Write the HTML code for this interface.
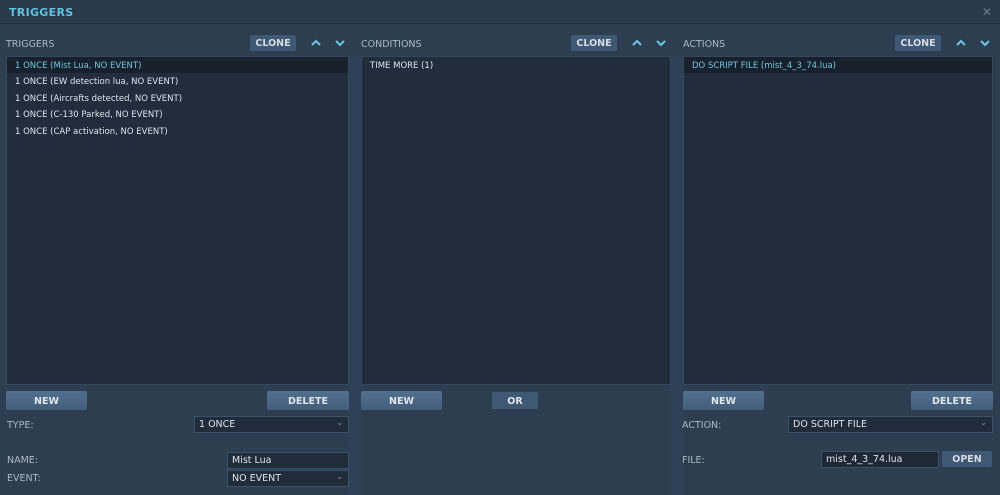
<!DOCTYPE html>
<html><head><style>
*{box-sizing:border-box;margin:0;padding:0}
body{width:1000px;height:495px;background:#2d3e51;font-family:"DejaVu Sans","Liberation Sans",sans-serif;position:relative;overflow:hidden;color:#c9d1da}
.a{position:absolute}
.hdr{left:0;top:0;width:1000px;height:24px;background:#2a394b;border-bottom:1px solid #25323f}
.title{left:9px;top:6px;font-size:11px;font-weight:bold;color:#5fc3e0;letter-spacing:.3px}
.x{left:982px;top:5px;color:#6d7c8c;font-size:12px}
.lbl{font-size:9.5px;color:#aeb7c1}
.list{background:#212d3c;border:1px solid #34475c}
.row{position:absolute;left:0;right:0;height:16px;font-size:8.5px;padding:4px 0 0 8px;color:#dde3e9}
.sel{background:#18212b;color:#6cc6e2}
.clone{height:16px;width:46px;background:#3f5873;color:#d5dbe1;font-size:9.5px;font-weight:bold;text-align:center;line-height:17px;border-radius:2px}
.btn{height:19px;background:linear-gradient(#52708f,#435e7b);color:#dfe5ea;font-size:9.5px;font-weight:bold;text-align:center;line-height:21px;border-radius:2px}
.dd{background:#202c3a;border:1px solid #3d5268;font-size:9.5px;color:#dde3e9;padding:2px 0 0 4px;height:17px}
.dd .c{position:absolute;right:5px;top:1px;font-size:8px;color:#8896a5}
</style></head><body>
<div class="a hdr"></div>
<div class="a title">TRIGGERS</div>
<div class="a x">✕</div>
<div class="a" style="left:349px;top:56px;width:12px;height:439px;background:#2e4156"></div>
<div class="a" style="left:671px;top:56px;width:12px;height:439px;background:#2e4156"></div>

<div class="a lbl" style="left:6px;top:39px">TRIGGERS</div>
<div class="a lbl" style="left:361px;top:39px">CONDITIONS</div>
<div class="a lbl" style="left:683px;top:39px">ACTIONS</div>

<div class="a clone" style="left:250px;top:35px">CLONE</div>
<div class="a clone" style="left:571px;top:35px">CLONE</div>
<div class="a clone" style="left:895px;top:35px">CLONE</div>
<svg class="a" style="left:310px;top:38px" width="40" height="10"><path d="M2 7L6 3L10 7M26 3L30 7L34 3" stroke="#6cc6e2" stroke-width="2" fill="none"/></svg>
<svg class="a" style="left:631px;top:38px" width="40" height="10"><path d="M2 7L6 3L10 7M26 3L30 7L34 3" stroke="#6cc6e2" stroke-width="2" fill="none"/></svg>
<svg class="a" style="left:955px;top:38px" width="40" height="10"><path d="M2 7L6 3L10 7M26 3L30 7L34 3" stroke="#6cc6e2" stroke-width="2" fill="none"/></svg>

<div class="a list" style="left:6px;top:56px;width:343px;height:329px">
<div class="row sel" style="top:0">1 ONCE (Mist Lua, NO EVENT)</div>
<div class="row" style="top:16px">1 ONCE (EW detection lua, NO EVENT)</div>
<div class="row" style="top:33px">1 ONCE (Aircrafts detected, NO EVENT)</div>
<div class="row" style="top:49px">1 ONCE (C-130 Parked, NO EVENT)</div>
<div class="row" style="top:66px">1 ONCE (CAP activation, NO EVENT)</div>
</div>
<div class="a list" style="left:361px;top:56px;width:310px;height:329px">
<div class="row" style="top:0">TIME MORE (1)</div>
</div>
<div class="a list" style="left:683px;top:56px;width:310px;height:329px">
<div class="row sel" style="top:0">DO SCRIPT FILE (mist_4_3_74.lua)</div>
</div>

<div class="a btn" style="left:6px;top:391px;width:81px">NEW</div>
<div class="a btn" style="left:267px;top:391px;width:82px">DELETE</div>
<div class="a btn" style="left:361px;top:391px;width:81px">NEW</div>
<div class="a btn" style="left:492px;top:392px;width:46px;height:17px;line-height:19px;background:#3f5873">OR</div>
<div class="a btn" style="left:683px;top:391px;width:81px">NEW</div>
<div class="a btn" style="left:911px;top:391px;width:82px">DELETE</div>

<div class="a lbl" style="left:7px;top:420px">TYPE:</div>
<div class="a dd" style="left:194px;top:416px;width:155px">1 ONCE<span class="c">⌄</span></div>
<div class="a lbl" style="left:7px;top:455px">NAME:</div>
<div class="a dd" style="left:227px;top:452px;width:122px">Mist Lua</div>
<div class="a lbl" style="left:7px;top:473px">EVENT:</div>
<div class="a dd" style="left:227px;top:470px;width:122px">NO EVENT<span class="c">⌄</span></div>

<div class="a lbl" style="left:682px;top:420px">ACTION:</div>
<div class="a dd" style="left:788px;top:416px;width:205px">DO SCRIPT FILE<span class="c">⌄</span></div>
<div class="a lbl" style="left:682px;top:455px">FILE:</div>
<div class="a dd" style="left:821px;top:451px;width:118px;background:#1e2935">mist_4_3_74.lua</div>
<div class="a clone" style="left:942px;top:451px;width:50px;height:16px">OPEN</div>
</body></html>
